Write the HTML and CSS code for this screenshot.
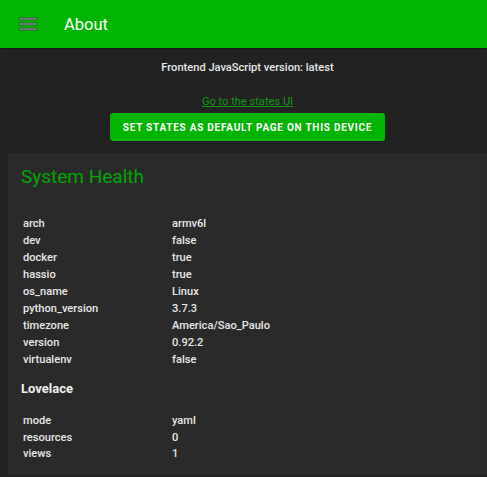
FILE: index.html
```html
<!DOCTYPE html>
<html>
<head>
<meta charset="utf-8">
<link rel="stylesheet" href="styles.css">
</head>
<body>
<header class="toolbar">
  <svg class="menu-icon" viewBox="0 0 24 24" width="24" height="24"><path d="M3,6H21V8H3V6M3,11H21V13H3V11M3,16H21V18H3V16Z"/></svg>
  <div class="title">About</div>
</header>
<main class="content">
  <p class="version">Frontend JavaScript version: latest</p>
  <a class="states-link" href="#">Go to the states UI</a>
  <button class="default-btn">Set states as default page on this device</button>
  <section class="card">
    <h1 class="card-title">System Health</h1>
    <table class="info">
      <tr><td>arch</td><td>armv6l</td></tr>
      <tr><td>dev</td><td>false</td></tr>
      <tr><td>docker</td><td>true</td></tr>
      <tr><td>hassio</td><td>true</td></tr>
      <tr><td>os_name</td><td>Linux</td></tr>
      <tr><td>python_version</td><td>3.7.3</td></tr>
      <tr><td>timezone</td><td>America/Sao_Paulo</td></tr>
      <tr><td>version</td><td>0.92.2</td></tr>
      <tr><td>virtualenv</td><td>false</td></tr>
    </table>
    <h2 class="section-title">Lovelace</h2>
    <table class="info info-small">
      <tr><td>mode</td><td>yaml</td></tr>
      <tr><td>resources</td><td>0</td></tr>
      <tr><td>views</td><td>1</td></tr>
    </table>
  </section>
</main>
</body>
</html>
```

FILE: styles.css
```css
html, body {
  margin: 0;
  padding: 0;
  background: #222222;
  font-family: Roboto, "Noto Sans", sans-serif;
  color: #e1e1e1;
  overflow: hidden;
}

.toolbar {
  height: 48px;
  background: #00b400;
  display: flex;
  align-items: center;
  box-shadow: 0 1px 2px rgba(0,0,0,0.4);
}

.menu-icon {
  margin-left: 16px;
  fill: #8c8c8c;
  stroke: #2f3f2f;
  stroke-width: 0.6;
}

.title {
  margin-left: 24px;
  font-size: 16.5px;
  color: #ffffff;
  font-weight: 400;
}

.content {
  padding-left: 8px;
  display: flex;
  flex-direction: column;
  align-items: center;
}

.version {
  margin: 12px 0 0;
  font-size: 11.1px;
  line-height: 16px;
  color: #e8e8e8;
  font-weight: 500;
}

.states-link {
  margin-top: 18px;
  font-size: 11.1px;
  line-height: 16px;
  color: #0f9a0f;
}

.default-btn {
  margin-top: 3px;
  width: 275px;
  height: 28px;
  background: #00b400;
  color: #ffffff;
  border: none;
  border-radius: 3px;
  font-family: Roboto, sans-serif;
  font-size: 10px;
  font-weight: 700;
  letter-spacing: 0.075em;
  text-transform: uppercase;
  white-space: nowrap;
  padding: 0;
}

.card {
  align-self: stretch;
  margin-top: 12px;
  background: #2a2a2a;
  height: 322px;
  padding: 0 0 0 13px;
  box-sizing: border-box;
}

.card-title {
  margin: 0;
  padding-top: 12px;
  font-size: 19px;
  line-height: 24px;
  font-weight: 400;
  color: #00a800;
}

.info {
  border-collapse: collapse;
  margin-left: 2px;
  font-size: 11.1px;
  font-weight: 500;
  color: #e8e8e8;
}

.card-title + .info {
  margin-top: 27px;
}

.info td {
  padding: 0;
  height: 16.9px;
  line-height: 16px;
}

.info-small td {
  height: 16.5px;
}

.info td:first-child {
  width: 149px;
}

.section-title {
  margin: 11px 0 14px;
  font-size: 13px;
  line-height: 20px;
  font-weight: 700;
  color: #f0f0f0;
}
```
